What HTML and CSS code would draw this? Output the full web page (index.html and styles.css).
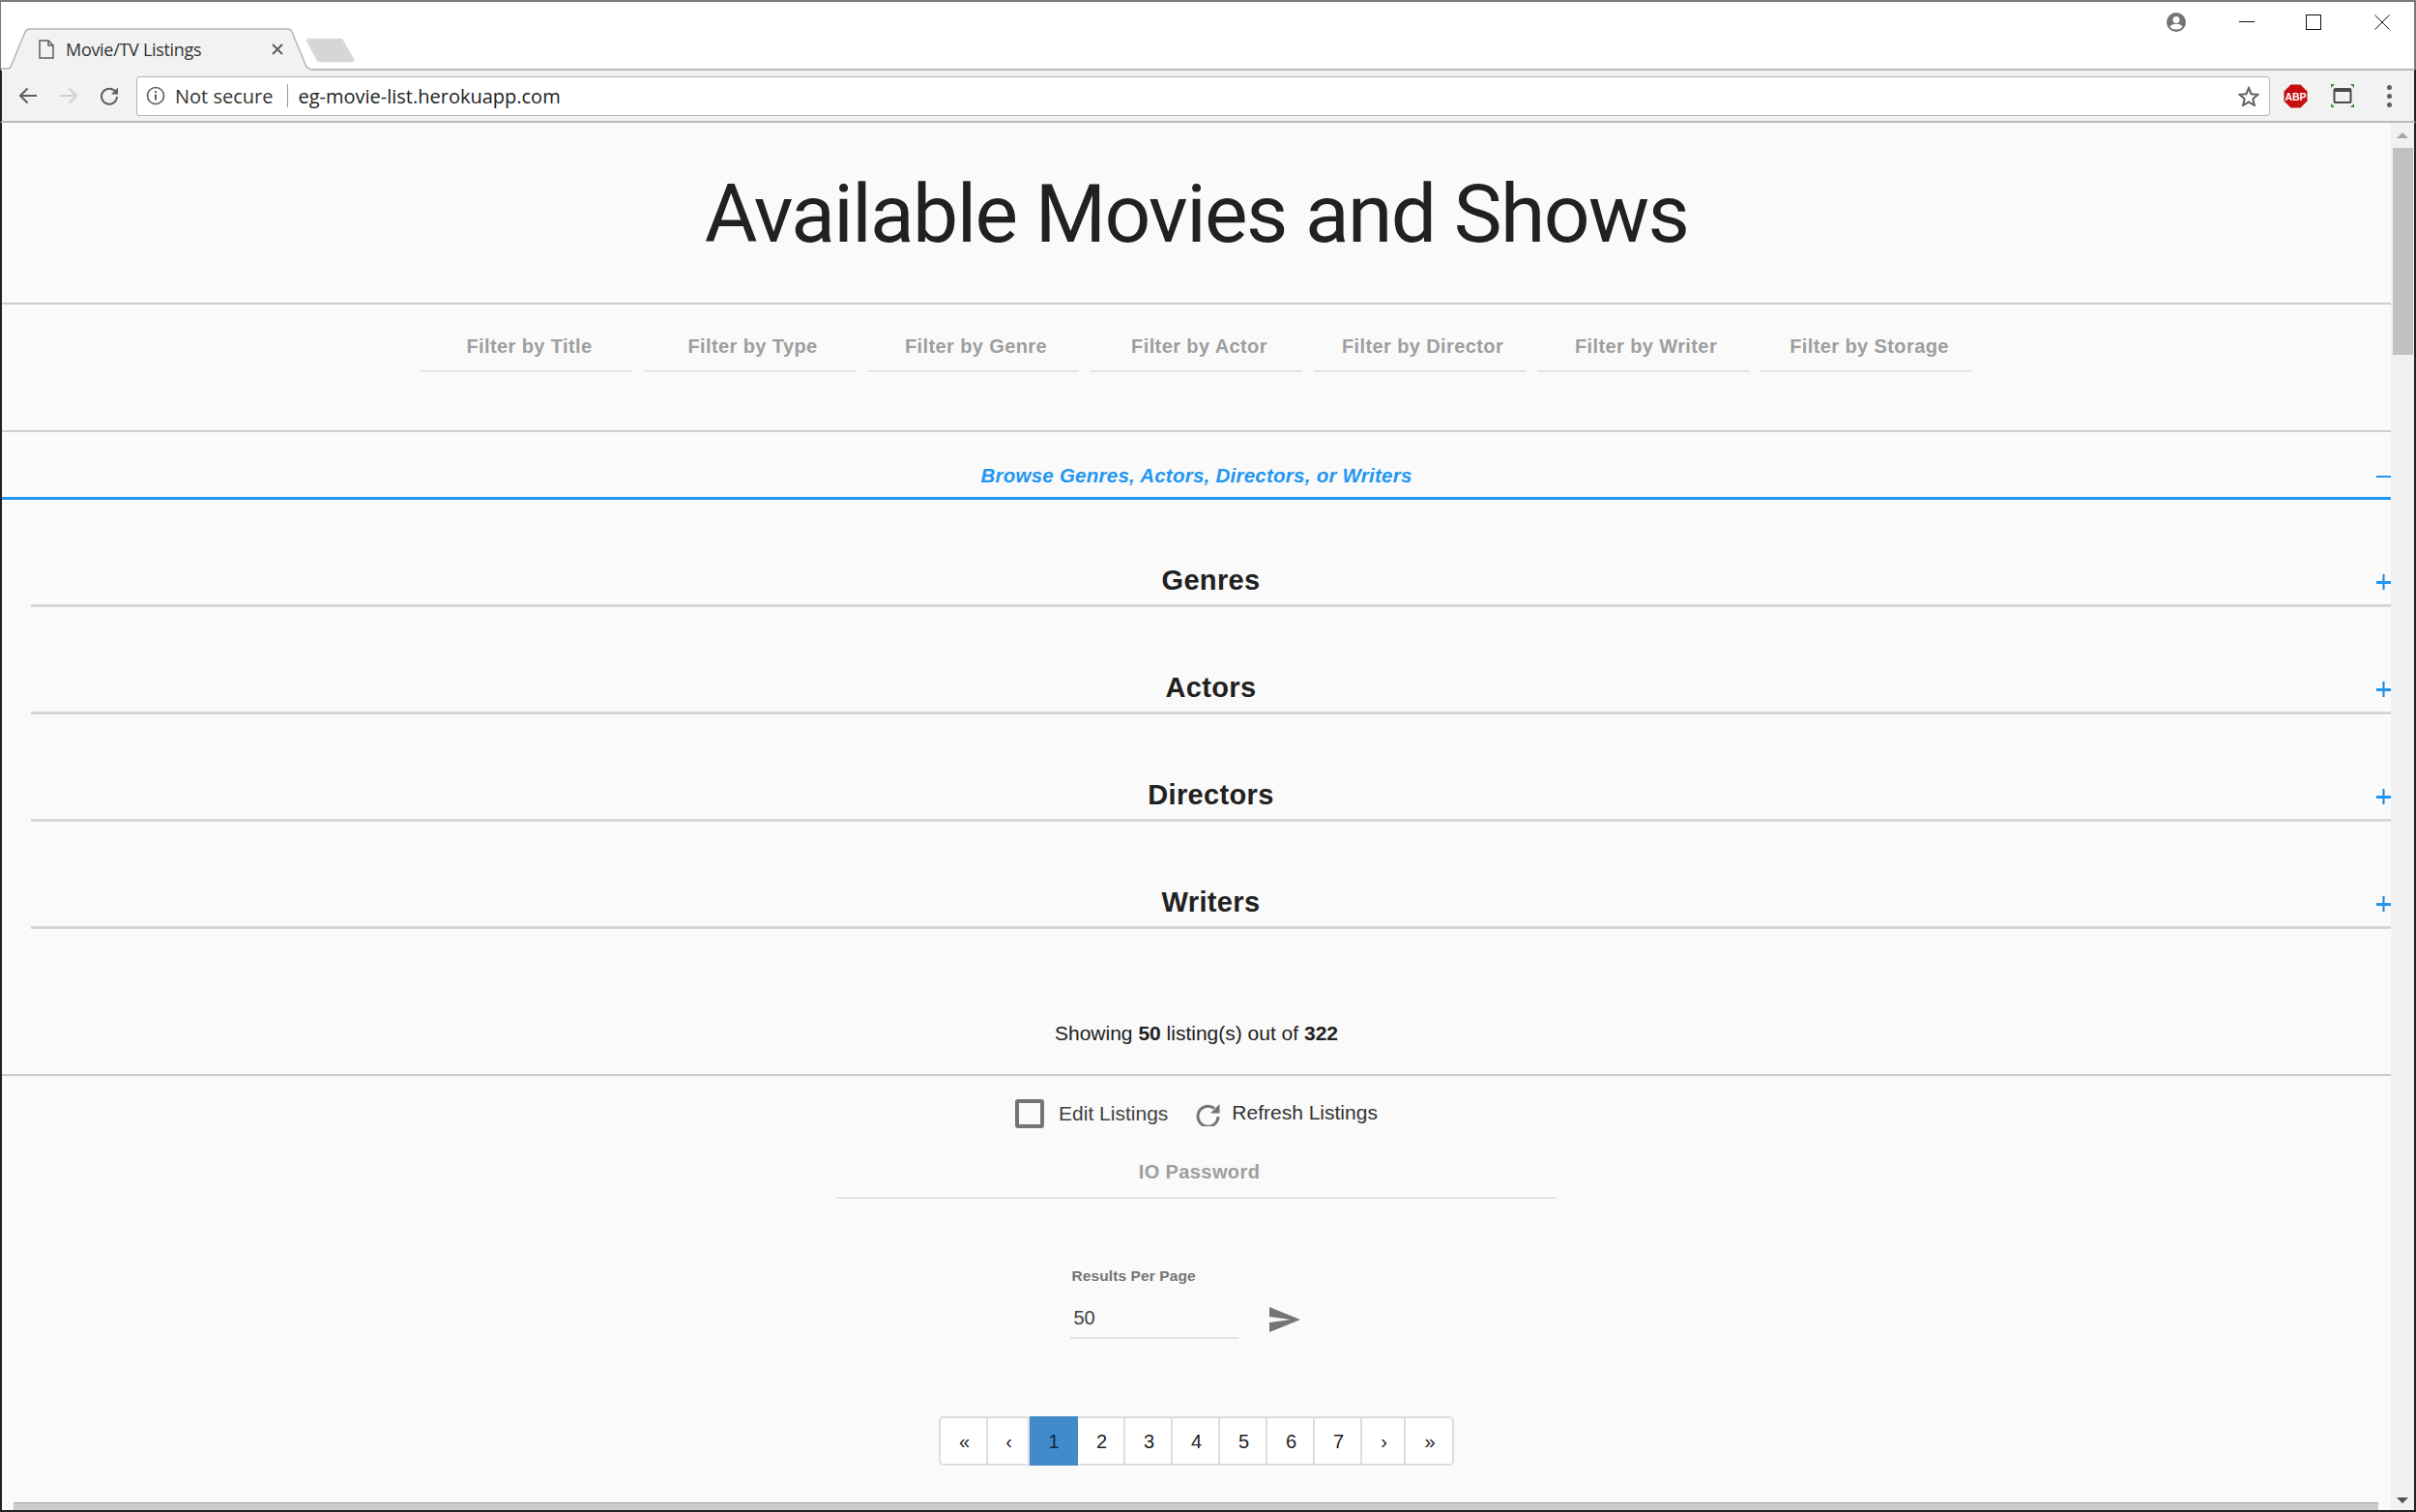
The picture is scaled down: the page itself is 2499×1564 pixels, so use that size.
FILE: index.html
```html
<!DOCTYPE html>
<html lang="en">
<head>
  <meta charset="UTF-8">
  <title>Movie/TV Listings</title>
  <link rel="stylesheet" href="styles.css">
</head>
<body>
<div class="window">

  <!-- tab strip -->
  <div class="tabstrip">
    <div class="tab">
      <svg class="tab-shape" width="320" height="44" viewBox="0 0 320 44">
        <path d="M0 42 H8 Q9.500 42 10.500 39 L25 4 Q26.500 1 30 1 H297 Q300 1 301 4 L315.500 39 Q316.500 42 320 42 V44 H0 Z" fill="#f2f2f2"/>
        <path d="M0 42 H8 Q9.500 42 10.500 39 L25 4 Q26.500 1 30 1 H297 Q300 1 301 4 L315.500 39 Q316.500 42 320 42" fill="none" stroke="#b4b4b4" stroke-width="1.500"/>
      </svg>
      <svg class="tab-doc" width="16" height="20" viewBox="0 0 16 20">
        <path d="M1 1 H10 L15 6 V19 H1 Z M10 1 V6 H15" fill="none" stroke="#5f5f5f" stroke-width="1.500"/>
      </svg>
      <span class="tab-title">Movie/TV Listings</span>
      <svg class="tab-close" width="12" height="12" viewBox="0 0 12 12">
        <path d="M1 1 L11 11 M11 1 L1 11" stroke="#5a5a5a" stroke-width="1.800"/>
      </svg>
    </div>
    <svg class="newtab" width="52" height="26" viewBox="0 0 52 26">
      <path d="M3 1 H36 Q38 1 39 3 L50 22 Q51 25 48 25 H15 Q12 25 11 22 L1 3 Q1 1 3 1 Z" fill="#d6d6d6" stroke="#e2e2e2"/>
    </svg>
    <div class="winbtns">
      <svg class="account" width="20" height="20" viewBox="0 0 20 20">
        <circle cx="10" cy="10" r="10" fill="#757575"/>
        <circle cx="10" cy="7.500" r="3.500" fill="#fff"/>
        <path d="M3.500 15 Q5 11.800 10 11.800 Q15 11.800 16.500 15 Q14 17.500 10 17.500 Q6 17.500 3.500 15 Z" fill="#fff"/>
      </svg>
      <svg class="win-min" width="16" height="16" viewBox="0 0 16 16"><path d="M0 7.500 H16" stroke="#111" stroke-width="1"/></svg>
      <svg class="win-max" width="16" height="16" viewBox="0 0 16 16"><rect x="0.500" y="0.500" width="15" height="15" fill="none" stroke="#111"/></svg>
      <svg class="win-close" width="16" height="16" viewBox="0 0 16 16"><path d="M0.500 0.500 L15.500 15.500 M15.500 0.500 L0.500 15.500" stroke="#111"/></svg>
    </div>
  </div>

  <!-- toolbar -->
  <div class="toolbar">
    <svg class="nav-back" width="20" height="18" viewBox="0 0 20 18"><path d="M19 9 H2 M9.500 1.500 L2 9 L9.500 16.500" fill="none" stroke="#5f5f5f" stroke-width="2"/></svg>
    <svg class="nav-fwd" width="20" height="18" viewBox="0 0 20 18"><path d="M1 9 H18 M10.500 1.500 L18 9 L10.500 16.500" fill="none" stroke="#cfcfcf" stroke-width="2"/></svg>
    <svg class="nav-reload" width="20" height="20" viewBox="0 0 20 20"><path d="M16.500 6 A8 8 0 1 0 18 11" fill="none" stroke="#5f5f5f" stroke-width="2"/><path d="M19 1.500 V8.500 H12 Z" fill="#5f5f5f"/></svg>
    <div class="omnibox">
      <svg class="info" width="20" height="20" viewBox="0 0 20 20">
        <circle cx="10" cy="10" r="8.500" fill="none" stroke="#5f5f5f" stroke-width="1.600"/>
        <rect x="9" y="8.500" width="2" height="6" fill="#5f5f5f"/><rect x="9" y="5" width="2" height="2" fill="#5f5f5f"/>
      </svg>
      <span class="secure">Not secure</span>
      <span class="omni-sep"></span>
      <span class="url">eg-movie-list.herokuapp.com</span>
      <svg class="star" width="22" height="21" viewBox="0 0 22 21">
        <path d="M11 2 L13.600 8.200 L20.500 8.800 L15.300 13.300 L16.900 20 L11 16.500 L5.100 20 L6.700 13.300 L1.500 8.800 L8.400 8.200 Z" fill="none" stroke="#5f5f5f" stroke-width="2"/>
      </svg>
    </div>
    <svg class="abp" width="25" height="25" viewBox="0 0 25 25">
      <path d="M7.500 0.500 H17.500 L24.500 7.500 V17.500 L17.500 24.500 H7.500 L0.500 17.500 V7.500 Z" fill="#c70d0d"/>
      <text x="12.500" y="16.500" text-anchor="middle" class="abp-text">ABP</text>
    </svg>
    <svg class="ext" width="24" height="24" viewBox="0 0 24 24">
      <path d="M0 4 V0 H4 Z M24 4 V0 H20 Z M0 20 V24 H4 Z M24 20 V24 H20 Z" fill="#3d8b37"/>
      <rect x="3.500" y="5" width="17" height="14" rx="1" fill="none" stroke="#4a4a4a" stroke-width="2"/>
      <rect x="3.500" y="5" width="17" height="3" fill="#4a4a4a"/>
    </svg>
    <div class="menu-dots"><i></i><i></i><i></i></div>
  </div>

  <!-- page and scrollbar -->
  <div class="viewport">
    <div class="page">
      <div class="page-body">
        <h1 class="title">Available Movies and Shows</h1>

        <div class="filters">
          <div class="field">Filter by Title</div>
          <div class="field">Filter by Type</div>
          <div class="field">Filter by Genre</div>
          <div class="field">Filter by Actor</div>
          <div class="field">Filter by Director</div>
          <div class="field">Filter by Writer</div>
          <div class="field">Filter by Storage</div>
        </div>

        <div class="browse">
          <span>Browse Genres, Actors, Directors, or Writers</span>
          <i class="toggle-minus"></i>
        </div>

        <div class="groups">
          <div class="group"><h2>Genres</h2><i class="toggle-plus"></i></div>
          <div class="group"><h2>Actors</h2><i class="toggle-plus"></i></div>
          <div class="group"><h2>Directors</h2><i class="toggle-plus"></i></div>
          <div class="group"><h2>Writers</h2><i class="toggle-plus"></i></div>
        </div>

        <p class="count">Showing <b>50</b> listing(s) out of <b>322</b></p>

        <div class="actions">
          <label class="edit"><i class="checkbox"></i>Edit Listings</label>
          <div class="refresh">
            <svg width="26" height="24" viewBox="0 0 26 24"><path d="M19 5.500 A10.500 10.500 0 1 0 23 14" fill="none" stroke="#757575" stroke-width="3"/><path d="M24.500 1 V10.500 H15 Z" fill="#757575"/></svg>
            <span>Refresh Listings</span>
          </div>
        </div>

        <div class="password">IO Password</div>

        <div class="perpage">
          <div class="perpage-field">
            <div class="perpage-label">Results Per Page</div>
            <div class="perpage-value">50</div>
          </div>
          <svg class="send" width="32" height="26" viewBox="0 0 32 26"><path d="M0 0 L32 13 L0 26 V16 L22 13 L0 10 Z" fill="#757575"/></svg>
        </div>

        <ul class="pager">
          <li>«</li>
          <li class="prev">‹</li>
          <li class="active">1</li>
          <li>2</li>
          <li>3</li>
          <li>4</li>
          <li>5</li>
          <li>6</li>
          <li>7</li>
          <li class="next">›</li>
          <li class="last">»</li>
        </ul>
      </div>
      <div class="hbar"><div class="hbar-thumb"></div></div>
    </div>
    <div class="vbar">
      <i class="arrow-up"></i>
      <div class="vbar-thumb"></div>
      <i class="arrow-down"></i>
    </div>
  </div>
</div>
</body>
</html>
```

FILE: styles.css
```css
html, body{
	margin:0;
	padding:0;
	background:#fff;
	overflow:hidden;
}
.window{
	box-sizing:border-box;
	width:2499px;
	height:1564px;
	display:flex;
	flex-direction:column;
	border-top:2px solid #7a7a7a;
	border-bottom:2px solid #222;
	font-family:"Liberation Sans",Arial,sans-serif;
}

/* tab strip */
.tabstrip{
	height:69px;
	flex:none;
	display:flex;
	align-items:flex-end;
	position:relative;
	z-index:1;
	border-left:1px solid #7a7a7a;
	border-right:2px solid #7a7a7a;
}
.tab{
	position:relative;
	width:320px;
	height:44px;
	margin-bottom:-2px;
	display:flex;
	align-items:center;
	flex:none;
}
.tab-shape{
	position:absolute;
	left:0;
	top:0;
}
.tab-doc{
	position:relative;
	margin-left:39px;
}
.tab-title{
	position:relative;
	margin-left:12px;
	font-family:"Open Sans","Noto Sans",sans-serif;
	font-size:18px;
	letter-spacing:-0.3px;
	color:#333;
}
.tab-close{
	position:relative;
	margin-left:auto;
	margin-right:28px;
}
.newtab{
	flex:none;
	margin-left:-5px;
	margin-bottom:6px;
}
.winbtns{
	margin-left:auto;
	align-self:flex-start;
	display:flex;
	align-items:center;
	height:30px;
	margin-top:6px;
}
.win-min{margin-left:55px;}
.win-max{margin-left:53px;}
.win-close{margin-left:55px;margin-right:25px;}

/* toolbar */
.toolbar{
	height:56px;
	flex:none;
	box-sizing:border-box;
	display:flex;
	align-items:center;
	background:#f2f2f2;
	border-top:2px solid #b9b9b9;
	border-bottom:2px solid #b9b9b9;
	border-left:2px solid #222;
	border-right:2px solid #222;
}
.nav-back{margin-left:17px;}
.nav-fwd{margin-left:22px;}
.nav-reload{margin-left:22px;}
.omnibox{
	box-sizing:border-box;
	width:2207px;
	height:41px;
	margin-left:18px;
	display:flex;
	align-items:center;
	background:#fff;
	border:1px solid #b3b3b3;
	border-radius:3px;
}
.info{margin-left:9px;}
.secure{
	margin-left:10px;
	font-family:"Open Sans","Noto Sans",sans-serif;
	font-size:20px;
	color:#333;
}
.omni-sep{
	width:1px;
	height:24px;
	margin-left:15px;
	background:#9a9a9a;
}
.url{
	margin-left:10px;
	font-family:"Open Sans","Noto Sans",sans-serif;
	font-size:20px;
	color:#222;
}
.star{margin-left:auto;margin-right:10px;}
.abp{margin-left:14px;}
.abp-text{
	font-family:"Liberation Sans",Arial,sans-serif;
	font-size:10.500px;
	font-weight:bold;
	fill:#fff;
}
.ext{margin-left:24px;}
.menu-dots{
	margin-left:34px;
	display:flex;
	flex-direction:column;
	gap:4px;
}
.menu-dots i{
	width:5px;
	height:5px;
	border-radius:50%;
	background:#5f5f5f;
}

/* page */
.viewport{
	flex:1;
	display:flex;
	min-height:0;
	border-left:2px solid #222;
	border-right:2px solid #222;
}
.page{
	flex:1;
	display:flex;
	flex-direction:column;
	min-width:0;
	background:#fafafa;
}
.page-body{
	flex:1;
	min-height:0;
	overflow:hidden;
	color:#212121;
}
.title{
	margin:0;
	height:188px;
	box-sizing:border-box;
	padding-top:25px;
	line-height:140px;
	text-align:center;
	font-family:Roboto,sans-serif;
	font-size:84px;
	font-weight:400;
	letter-spacing:-1.6px;
	color:#212121;
	border-bottom:2px solid #ccc;
}
.filters{
	height:132px;
	box-sizing:border-box;
	padding-top:25px;
	display:flex;
	justify-content:center;
	gap:12px;
	border-bottom:2px solid #ccc;
}
.field{
	width:219px;
	height:45px;
	padding-left:6px;
	line-height:37px;
	text-align:center;
	font-size:20px;
	font-weight:bold;
	letter-spacing:0.4px;
	color:#9e9e9e;
	border-bottom:2px solid #e3e3e3;
	box-sizing:border-box;
}
.browse{
	height:70px;
	box-sizing:border-box;
	padding-top:32px;
	position:relative;
	text-align:center;
	font-size:20.500px;
	font-weight:bold;
	font-style:italic;
	letter-spacing:0.25px;
	line-height:26px;
	color:#2196f3;
	border-bottom:3px solid #2196f3;
}
.toggle-minus{
	position:absolute;
	right:0;
	top:45px;
	width:15px;
	height:2px;
	background:#2196f3;
}
.groups{
	padding-left:30px;
}
.group{
	height:111px;
	box-sizing:border-box;
	position:relative;
	border-bottom:3px solid #d6d6d6;
	display:flex;
	align-items:flex-end;
	justify-content:center;
}
.group h2{
	margin:0 0 7px;
	font-family:"Liberation Sans",Arial,sans-serif;
	font-size:29px;
	font-weight:bold;
	letter-spacing:0.35px;
	line-height:36px;
	color:#212121;
}
.toggle-plus{
	position:absolute;
	right:0;
	bottom:15px;
	width:15px;
	height:16px;
	background:
		linear-gradient(#2196f3,#2196f3) center/15px 3px no-repeat,
		linear-gradient(#2b7fc4,#2b7fc4) center/1px 16px no-repeat,
		linear-gradient(#7cc0f7,#7cc0f7) center/3px 16px no-repeat;
}
.count{
	margin:0;
	height:152px;
	box-sizing:border-box;
	padding-top:95px;
	text-align:center;
	font-size:21px;
	line-height:26px;
	color:#212121;
	border-bottom:2px solid #ccc;
}
.actions{
	height:60px;
	display:flex;
	justify-content:center;
	gap:29px;
	padding-top:23px;
	box-sizing:border-box;
}
.edit{
	display:flex;
	align-items:center;
	gap:15px;
	height:32px;
	font-size:21px;
	color:#424242;
}
.checkbox{
	display:block;
	width:30px;
	height:30px;
	box-sizing:border-box;
	border:4px solid #757575;
	border-radius:3px;
}
.refresh{
	display:flex;
	align-items:center;
	gap:11px;
	height:30px;
	font-size:21px;
	color:#333;
}
.refresh svg{
	margin-top:3px;
}
.password{
	width:745px;
	height:67px;
	box-sizing:border-box;
	margin:0 auto;
	padding:26px 0 0 6px;
	text-align:center;
	font-size:20px;
	font-weight:bold;
	letter-spacing:0.4px;
	line-height:26px;
	color:#9e9e9e;
	border-bottom:2px solid #e3e3e3;
}
.perpage{
	display:flex;
	justify-content:center;
	align-items:flex-end;
	gap:32px;
	margin-top:70px;
	margin-left:-24px;
}
.perpage-field{
	width:174px;
	border-bottom:2px solid #e3e3e3;
}
.perpage-label{
	padding-left:2px;
	font-size:15.500px;
	font-weight:bold;
	letter-spacing:0.1px;
	line-height:20px;
	color:#757575;
}
.perpage-value{
	padding:21px 0 8px 4px;
	font-size:20px;
	line-height:24px;
	color:#424242;
}
.send{
	margin-bottom:7px;
}
.pager{
	list-style:none;
	margin:80px auto 0;
	padding:0;
	width:533px;
	height:51px;
	display:flex;
	box-sizing:border-box;
	border:2px solid #ddd;
	border-radius:5px;
	background:#fff;
	font-size:20px;
	color:#222;
}
.pager li{
	flex:0 0 49px;
	box-sizing:border-box;
	padding:1px 0 0 2px;
	display:flex;
	align-items:center;
	justify-content:center;
	border-right:2px solid #ddd;
}
.pager li.prev{
	flex-basis:43px;
}
.pager li.next{
	flex-basis:45px;
}
.pager li.last{
	flex:1;
	border-right:none;
}
.pager li.active{
	flex-basis:50px;
	margin:-2px 0;
	padding-left:0;
	background:#428bca;
	border-right:none;
	color:#0e2a44;
}
.hbar{
	height:8px;
	flex:none;
	padding-left:12px;
	padding-right:13px;
}
.hbar-thumb{
	height:100%;
	box-sizing:border-box;
	background:#cbcbcb;
	border-top:1px solid #aaa;
}
.vbar{
	width:24px;
	flex:none;
	position:relative;
	background:#f1f1f1;
}
.vbar-thumb{
	margin:26px 1px 0 2px;
	height:214px;
	background:#c1c1c1;
}
.arrow-up{
	position:absolute;
	top:10px;
	left:6px;
	border:6px solid transparent;
	border-top:none;
	border-bottom-color:#a8a8a8;
}
.arrow-down{
	position:absolute;
	bottom:7px;
	left:6px;
	border:6px solid transparent;
	border-bottom:none;
	border-top-color:#505050;
}
```
